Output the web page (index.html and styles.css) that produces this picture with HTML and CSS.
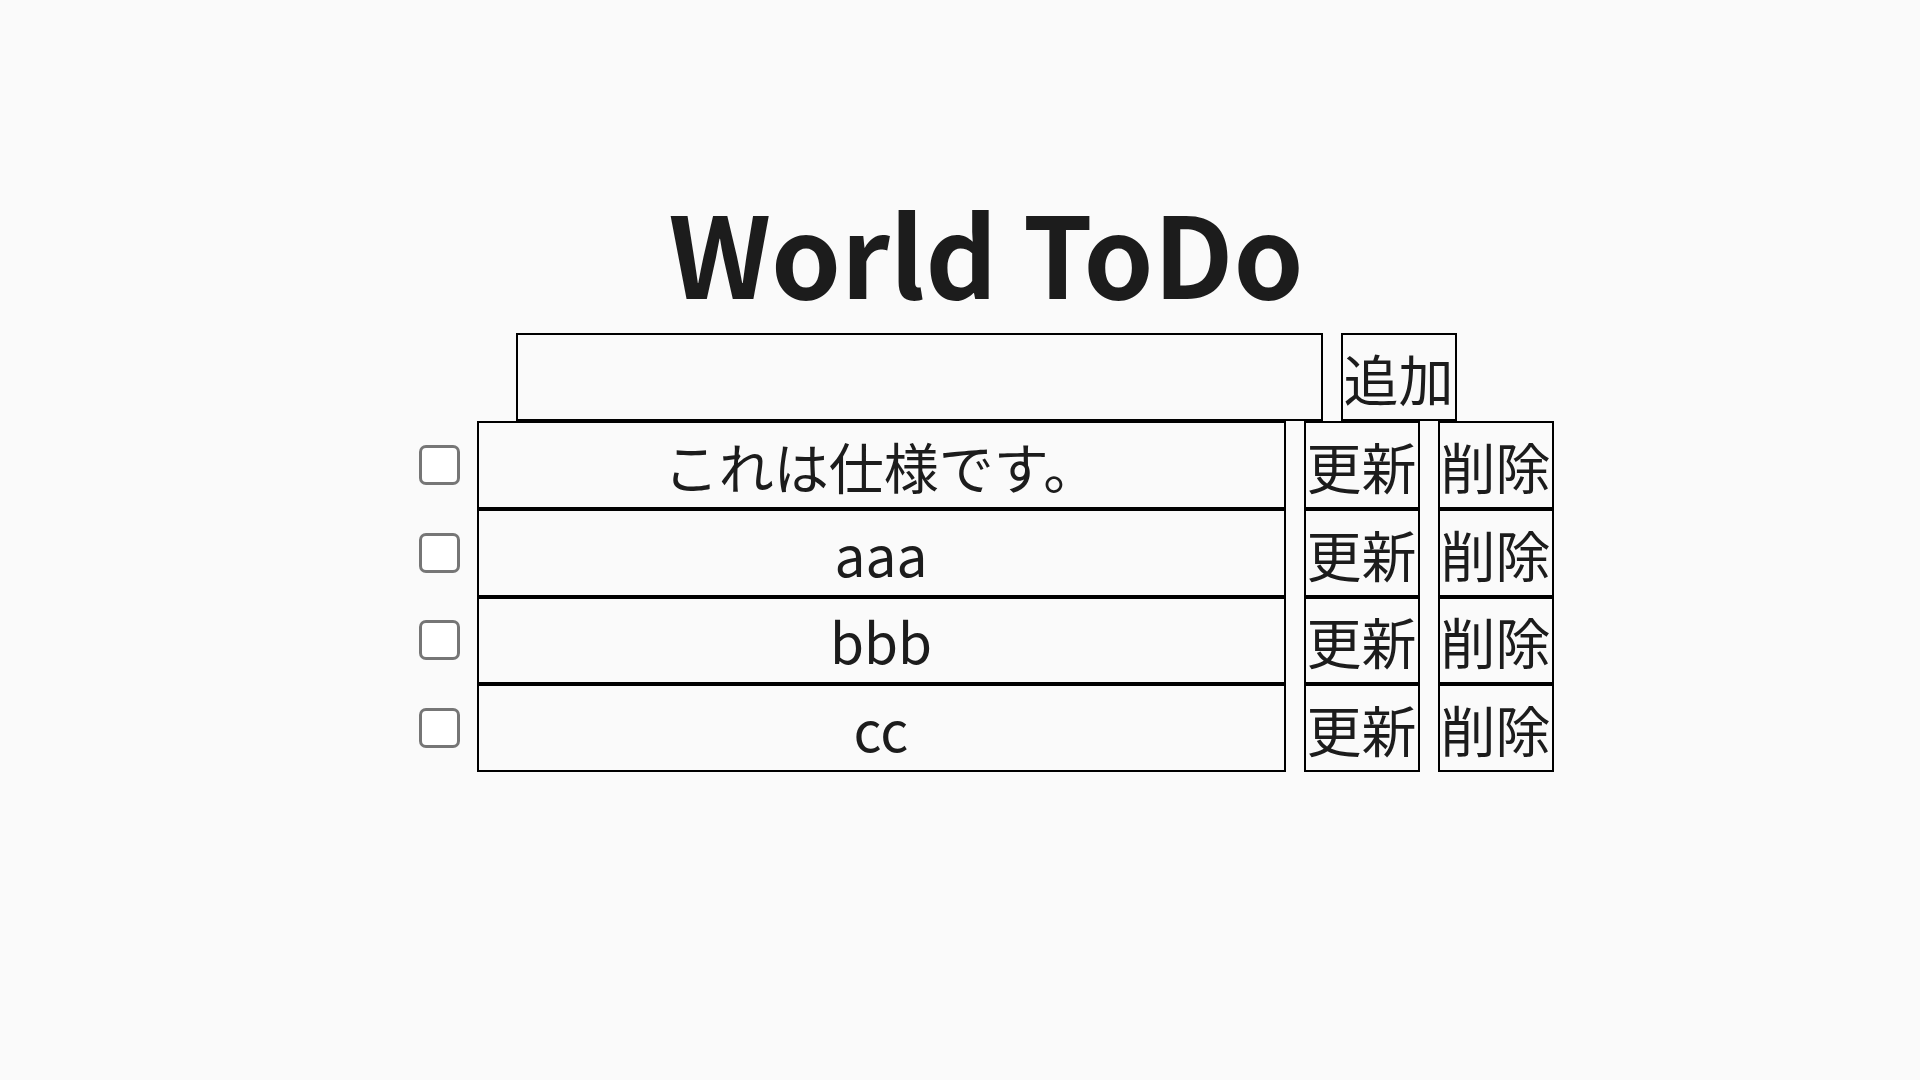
FILE: index.html
```html
<!DOCTYPE html>
<html lang="ja">
<head>
<meta charset="utf-8">
<title>World ToDo</title>
<link rel="stylesheet" href="styles.css">
</head>
<body>
<div class="app">
  <h1 class="title">World ToDo</h1>
  <form class="add-form">
    <input class="add-input" type="text" value="">
    <button class="btn" type="button">追加</button>
  </form>
  <ul class="todo-list">
    <li class="todo-row">
      <input class="check" type="checkbox">
      <input class="todo-text" type="text" value="これは仕様です。">
      <button class="btn" type="button">更新</button>
      <button class="btn" type="button">削除</button>
    </li>
    <li class="todo-row">
      <input class="check" type="checkbox">
      <input class="todo-text" type="text" value="aaa">
      <button class="btn" type="button">更新</button>
      <button class="btn" type="button">削除</button>
    </li>
    <li class="todo-row">
      <input class="check" type="checkbox">
      <input class="todo-text" type="text" value="bbb">
      <button class="btn" type="button">更新</button>
      <button class="btn" type="button">削除</button>
    </li>
    <li class="todo-row">
      <input class="check" type="checkbox">
      <input class="todo-text" type="text" value="cc">
      <button class="btn" type="button">更新</button>
      <button class="btn" type="button">削除</button>
    </li>
  </ul>
</div>
</body>
</html>
```

FILE: styles.css
```css
html, body {
  margin: 0;
  padding: 0;
  background: #fafafa;
}
body {
  font-family: "Noto Sans CJK JP", "Noto Sans", sans-serif;
  color: #1c1c1c;
}
.app {
  display: flex;
  flex-direction: column;
  align-items: center;
  padding-top: 194px;
  padding-left: 52px;
}
.title {
  margin: 0;
  font-size: 112px;
  line-height: 112px;
  font-weight: 700;
  color: #1c1c1c;
}
.add-form {
  margin: 27px 0 0 0;
  display: flex;
  gap: 18px;
}
.add-input {
  box-sizing: border-box;
  width: 807px;
  height: 88px;
  margin: 0;
  border: 2px solid #000;
  background: #fafafa;
  font-family: inherit;
  font-size: 55px;
  padding: 0 4px;
}
.btn {
  box-sizing: border-box;
  width: 116px;
  margin: 0;
  padding: 0;
  border: 2px solid #000;
  background: #fafafa;
  color: #1c1c1c;
  font-family: "Noto Sans CJK JP", sans-serif;
  font-size: 55px;
  line-height: 1.2;
  white-space: nowrap;
  display: flex;
  align-items: center;
  justify-content: center;
}
.add-form .btn {
  height: 88px;
}
.todo-list {
  list-style: none;
  margin: 0;
  padding: 0;
  display: flex;
  flex-direction: column;
}
.todo-row {
  display: flex;
  align-items: center;
  height: 87.75px;
}
.check {
  appearance: none;
  -webkit-appearance: none;
  box-sizing: border-box;
  width: 41px;
  height: 40px;
  margin: 0 17px 0 0;
  border: 3px solid #767676;
  border-radius: 7px;
  background: #fff;
}
.todo-text {
  box-sizing: border-box;
  width: 809px;
  height: 100%;
  margin: 0 18px 0 0;
  padding: 0 4px;
  border: 2px solid #000;
  background: #fafafa;
  color: #1c1c1c;
  font-family: inherit;
  font-size: 55px;
  text-align: center;
}
.todo-row .btn {
  height: 100%;
}
.todo-row .btn + .btn {
  margin-left: 18px;
}
```
